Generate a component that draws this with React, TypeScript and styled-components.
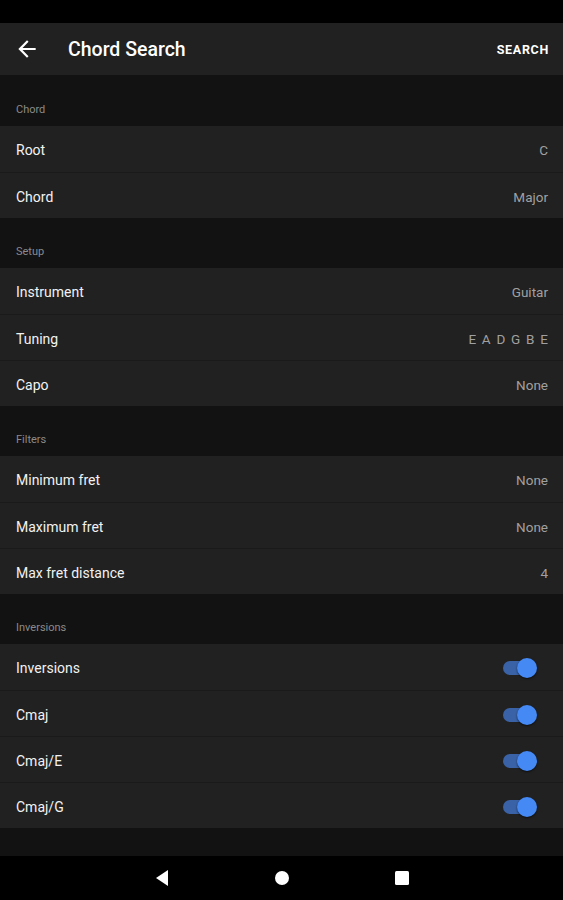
import styled, { createGlobalStyle } from "styled-components";

const GlobalStyle = createGlobalStyle`
    html, body {
        margin: 0;
        padding: 0;
        background: #121212;
    }
    body {
        font-family: Roboto, "Noto Sans", "Liberation Sans", sans-serif;
        -webkit-font-smoothing: antialiased;
    }
`;

interface Item {
    label: string;
    value?: string;
    toggle?: boolean;
    spaced?: boolean;
}

interface Section {
    title: string;
    items: Item[];
}

const sections: Section[] = [
    { title: "Chord", items: [{ label: "Root", value: "C" }, { label: "Chord", value: "Major" }] },
    {
        title: "Setup",
        items: [
            { label: "Instrument", value: "Guitar" },
            { label: "Tuning", value: "E A D G B E", spaced: true },
            { label: "Capo", value: "None" },
        ],
    },
    {
        title: "Filters",
        items: [
            { label: "Minimum fret", value: "None" },
            { label: "Maximum fret", value: "None" },
            { label: "Max fret distance", value: "4" },
        ],
    },
    {
        title: "Inversions",
        items: [
            { label: "Inversions", toggle: true },
            { label: "Cmaj", toggle: true },
            { label: "Cmaj/E", toggle: true },
            { label: "Cmaj/G", toggle: true },
        ],
    },
];

export default function App() {
    return (
        <>
            <GlobalStyle />
            <Screen>
                <StatusBar />
                <Toolbar>
                    <BackBtn>
                        <svg width="26" height="26" viewBox="0 0 24 24">
                            <path fill="#ffffff" d="M20 11H7.83l5.59-5.59L12 4l-8 8 8 8 1.41-1.41L7.83 13H20v-2z" />
                        </svg>
                    </BackBtn>
                    <Title>Chord Search</Title>
                    <ActionBtn>SEARCH</ActionBtn>
                </Toolbar>
                <Content>
                    {sections.map((section) => (
                        <div key={section.title}>
                            <SectionHeader>{section.title}</SectionHeader>
                            <List>
                                {section.items.map((item) => (
                                    <Row key={item.label}>
                                        <Label>{item.label}</Label>
                                        {item.toggle ? (
                                            <Switch>
                                                <Track />
                                                <Thumb />
                                            </Switch>
                                        ) : (
                                            <Value $spaced={item.spaced}>{item.value}</Value>
                                        )}
                                    </Row>
                                ))}
                            </List>
                        </div>
                    ))}
                </Content>
                <NavBar>
                    <svg width="16" height="18" viewBox="0 0 16 18">
                        <path fill="#ffffff" d="M14 1 L2 9 L14 17 Z" />
                    </svg>
                    <svg width="16" height="16" viewBox="0 0 16 16">
                        <circle cx="8" cy="8" r="7" fill="#ffffff" />
                    </svg>
                    <svg width="16" height="16" viewBox="0 0 16 16">
                        <rect x="1" y="1" width="14" height="14" rx="1.5" fill="#ffffff" />
                    </svg>
                </NavBar>
            </Screen>
        </>
    );
}

const Screen = styled.div`
    width: 563px;
    height: 900px;
    display: flex;
    flex-direction: column;
    background: #121212;
    overflow: hidden;
`;

const StatusBar = styled.div`
    height: 23px;
    flex-shrink: 0;
    background: #000;
`;

const Toolbar = styled.div`
    height: 52px;
    flex-shrink: 0;
    display: flex;
    align-items: center;
    background: #212121;
    padding: 0 14px 0 14px;
`;

const BackBtn = styled.div`
    width: 26px;
    display: flex;
    align-items: center;
`;

const Title = styled.div`
    margin-left: 28px;
    flex: 1;
    color: #fff;
    font-size: 19.5px;
    font-weight: 500;
`;

const ActionBtn = styled.div`
    color: #fff;
    font-size: 12.5px;
    font-weight: 700;
    letter-spacing: 0.7px;
`;

const Content = styled.div`
    flex: 1;
    padding-top: 1px;
`;

const SectionHeader = styled.div`
    height: 50px;
    box-sizing: border-box;
    padding: 0 16px 10px;
    display: flex;
    align-items: flex-end;
    color: #8a8a8a;
    font-size: 11px;
`;

const List = styled.div`
    background: #212121;
`;

const Row = styled.div`
    height: 46px;
    box-sizing: border-box;
    display: flex;
    align-items: center;
    justify-content: space-between;
    padding: 2px 15px 0 16px;
    border-top: 1px solid #1a1a1a;
    &:first-child {
        border-top: none;
    }
`;

const Label = styled.div`
    color: #f2f2f2;
    font-size: 14px;
`;

const Value = styled.div<{ $spaced?: boolean }>`
    color: #a0a0a0;
    font-size: 13.5px;
    letter-spacing: ${(p) => (p.$spaced ? "1.2px" : "0")};
    margin-right: ${(p) => (p.$spaced ? "-1px" : "0")};
`;

const Switch = styled.div`
    position: relative;
    width: 34px;
    height: 20px;
    margin-right: 11px;
`;

const Track = styled.div`
    position: absolute;
    left: 0;
    top: 3px;
    width: 30px;
    height: 14px;
    border-radius: 7px;
    background: #3a62a6;
`;

const Thumb = styled.div`
    position: absolute;
    right: 0;
    top: 0;
    width: 20px;
    height: 20px;
    border-radius: 50%;
    background: #4589f5;
    box-shadow: 0 1px 2px rgba(0, 0, 0, 0.6);
`;

const NavBar = styled.div`
    height: 44px;
    flex-shrink: 0;
    background: #000;
    display: flex;
    align-items: center;
    justify-content: center;
    gap: 104px;
`;
